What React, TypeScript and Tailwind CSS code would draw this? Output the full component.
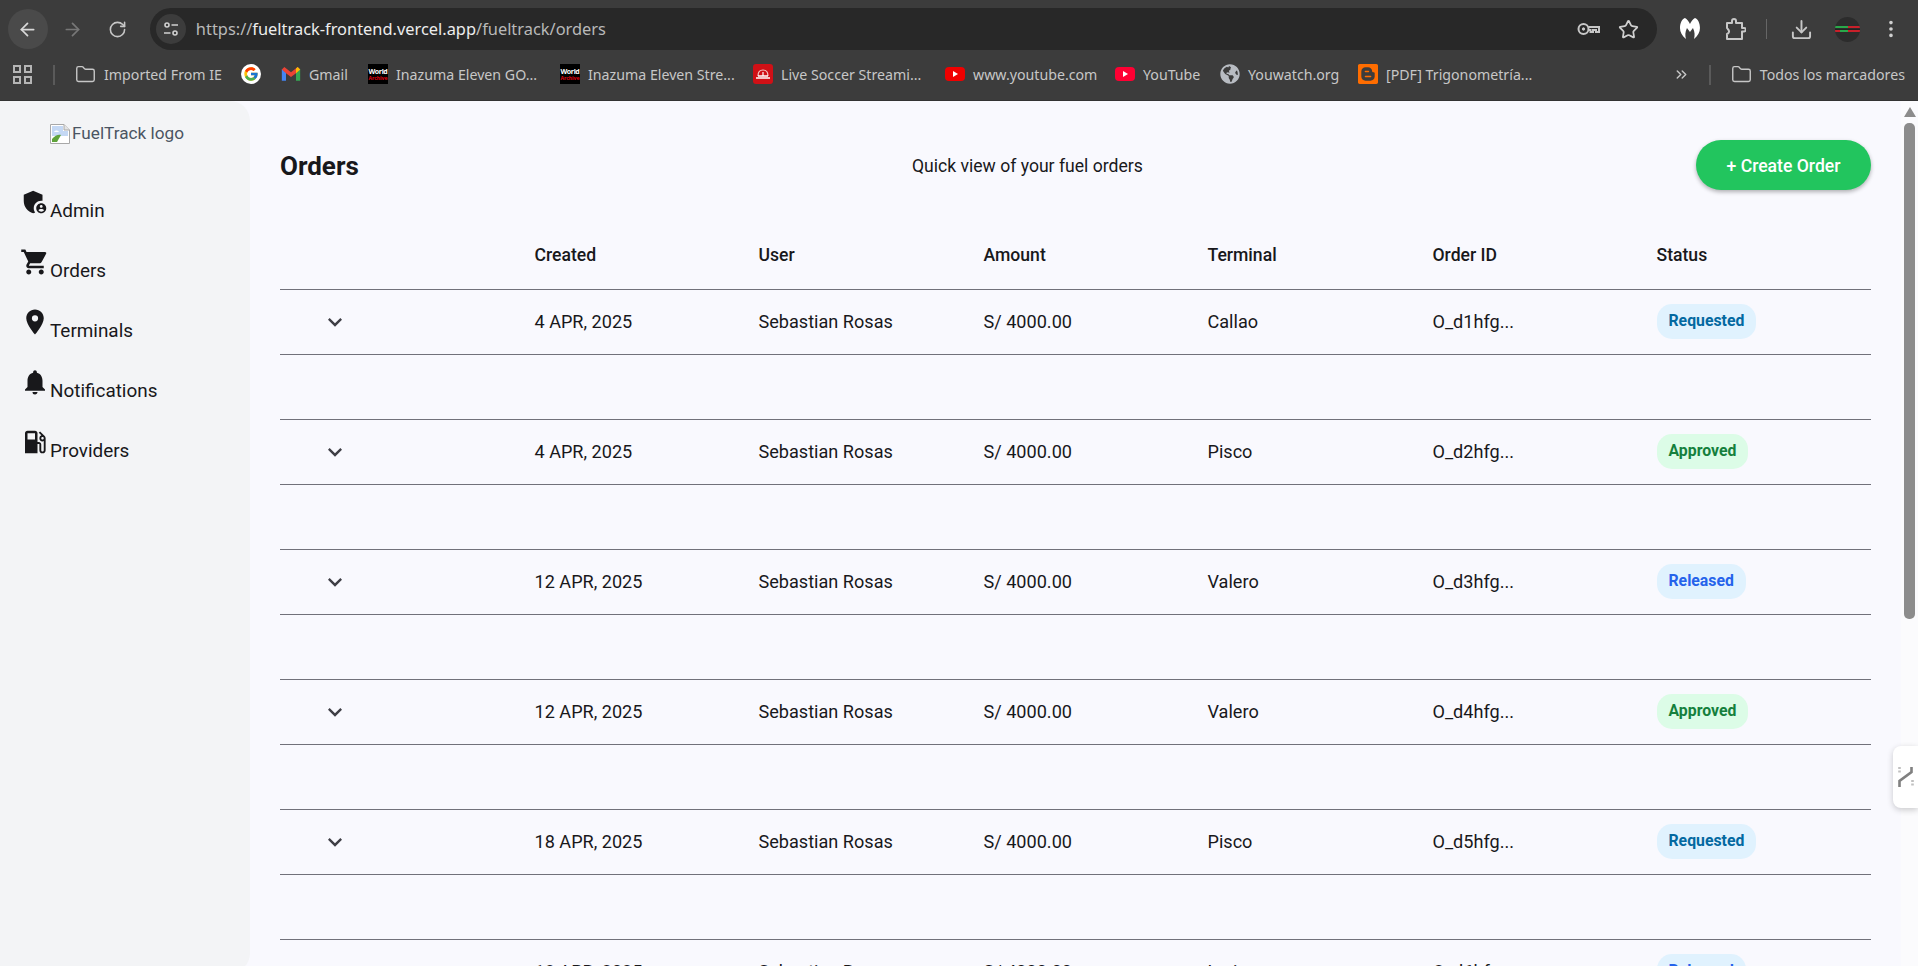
import { ArrowLeft, ArrowRight, RotateCw, Star, Download, EllipsisVertical, Folder, ChevronsRight } from 'lucide-react'
import { FcGoogle } from 'react-icons/fc'
import { SiBlogger } from 'react-icons/si'
import { FaGlobeAmericas } from 'react-icons/fa'
import { MdAdminPanelSettings, MdShoppingCart, MdLocationOn, MdNotifications, MdLocalGasStation, MdExpandMore } from 'react-icons/md'

function WorldIcon() {
  return (
    <span className="w-5 h-5 bg-black flex flex-col items-center justify-center shrink-0 leading-none font-bold overflow-hidden">
      <span className="text-[7px] text-white leading-[7px] tracking-tighter">World</span>
      <span className="text-[5px] text-red-600 leading-[6px]">Archive</span>
    </span>
  )
}

function GmailIcon() {
  return (
    <svg width="20" height="20" viewBox="0 0 24 24" className="shrink-0">
      <path d="M1 6v14h5V10z" fill="#4285f4" />
      <path d="M23 6v14h-5V10z" fill="#34a853" />
      <path d="M1 6.5 L4 3.5 L12 10 L20 3.5 L23 6.5 L18 11 L12 15.5 L6 11z" fill="#ea4335" />
      <path d="M18 5.5 20 3.5 23 6.5 18 11z" fill="#fbbc04" />
    </svg>
  )
}

function SoccerIcon() {
  return (
    <svg width="20" height="20" viewBox="0 0 20 20" className="shrink-0">
      <rect width="20" height="20" rx="3" fill="#d01016" />
      <path d="M5 12c0-4 2-6 5-6s5 2 5 6" fill="none" stroke="#f6c9c9" strokeWidth="1.2" />
      <path d="M3 14h14M5 12h10" stroke="#fff" strokeWidth="1.3" />
      <path d="M10 8v4" stroke="#fff" strokeWidth="1.2" />
    </svg>
  )
}

function YoutubeIcon({ color }: { color: string }) {
  return (
    <svg width="20" height="20" viewBox="0 0 20 20" className="shrink-0">
      <rect y="3" width="20" height="14" rx="4" fill={color} />
      <path d="M8 7l5 3-5 3z" fill="#fff" />
    </svg>
  )
}

function KeyIcon() {
  return (
    <svg width="23" height="14" viewBox="0 0 23 14" fill="none" stroke="#c7c7c7" strokeWidth="2" className="shrink-0">
      <circle cx="6.5" cy="7" r="5" />
      <circle cx="6.5" cy="7" r="1.2" fill="#c7c7c7" strokeWidth="1" />
      <path d="M11.5 5H22V10H19V8H16V10H13.5V8H11.5" />
    </svg>
  )
}

function PuzzleIcon() {
  return (
    <svg width="21" height="23" viewBox="0 0 21 23" fill="none" stroke="#c7c7c7" strokeWidth="2" strokeLinejoin="round" className="ml-[24px] shrink-0">
      <path d="M2 5H7V3a2 2 0 0 1 4 0V5H17V10H19a1.8 1.8 0 0 1 0 3.6H17V21H2V16a2.6 2.6 0 0 0 1-4.6 2.6 2.6 0 0 0-1-1.4z" />
    </svg>
  )
}

const folderIcon = <Folder size={21} strokeWidth={1.6} className="text-[#c7c7c7] shrink-0" />

const bookmarks = [
  { icon: folderIcon, label: 'Imported From IE', width: 'w-[117px]' },
  { icon: <span className="w-5 h-5 bg-white rounded-full flex items-center justify-center shrink-0"><FcGoogle size={16} /></span>, label: '', width: '' },
  { icon: <GmailIcon />, label: 'Gmail', width: 'w-[39px]' },
  { icon: <WorldIcon />, label: 'Inazuma Eleven GO...', width: 'w-[144px]' },
  { icon: <WorldIcon />, label: 'Inazuma Eleven Stre...', width: 'w-[145px]' },
  { icon: <SoccerIcon />, label: 'Live Soccer Streami...', width: 'w-[144px]' },
  { icon: <YoutubeIcon color="#f00000" />, label: 'www.youtube.com', width: 'w-[122px]' },
  { icon: <YoutubeIcon color="#ff0033" />, label: 'YouTube', width: 'w-[57px]' },
  { icon: <FaGlobeAmericas size={20} className="text-[#b8bcc2] shrink-0" />, label: 'Youwatch.org', width: 'w-[90px]' },
  { icon: <SiBlogger size={20} className="text-[#ff6d00] shrink-0" />, label: '[PDF] Trigonometría...', width: 'w-[144px]' },
]

function BrowserChrome() {
  return (
    <div className="bg-[#3c3c3c] shrink-0 font-['Noto_Sans',sans-serif] border-b border-[#333]">
      <div className="h-[58px] flex items-center pl-2 pr-[16px]">
        <div className="w-10 h-10 rounded-full bg-[#4a4a4a] flex items-center justify-center">
          <ArrowLeft size={21} strokeWidth={2} className="text-[#d8d8d8]" />
        </div>
        <ArrowRight size={21} strokeWidth={2} className="text-[#777777] ml-[14px]" />
        <RotateCw size={19} strokeWidth={2} className="text-[#c7c7c7] ml-[25px]" />
        <div className="ml-[23px] w-[1510px] h-[42px] rounded-full bg-[#282828] flex items-center pl-[6px] pr-[18px]">
          <div className="w-[30px] h-[30px] rounded-full bg-[#3c3c3c] flex items-center justify-center">
            <svg width="18" height="18" viewBox="0 0 18 18" fill="none" stroke="#d0d0d0" strokeWidth="1.6">
              <circle cx="5" cy="5" r="2" />
              <path d="M9.5 5H16M2 13h6.5" />
              <circle cx="13" cy="13" r="2" />
            </svg>
          </div>
          <div className="ml-[10px] text-[16.4px] text-[#b9b9b9] flex-1">
            https://<span className="text-[#ededed]">fueltrack-frontend.vercel.app</span>/fueltrack/orders
          </div>
          <KeyIcon />
          <Star size={21} strokeWidth={2} className="text-[#d0d0d0] ml-[18px]" />
        </div>
        <svg width="22" height="24" viewBox="0 0 22 24" className="ml-[22px]">
          <path d="M1 11C1 6 3 2 6 1c2 1 4 4 5 6 1-2 3-5 5-6 3 1 5 5 5 10 0 4-2 8-6 11 1-3 1-7-1-11l-3 4-3-4c-2 4-2 8-1 11-4-3-6-7-6-11z" fill="#fff" />
        </svg>
        <PuzzleIcon />
        <div className="w-px h-[20px] bg-[#666] ml-[20px]" />
        <Download size={23} strokeWidth={2} className="text-[#c7c7c7] ml-[23px]" />
        <div className="w-[25px] h-[25px] rounded-full bg-[#2c2c2c] ml-[22px] flex flex-col justify-center overflow-hidden">
          <div className="h-[2px] bg-[linear-gradient(90deg,#2aa84a_50%,#c8202a_50%)]" />
          <div className="h-px mt-px bg-[#222]" />
          <div className="h-[2px] bg-[linear-gradient(90deg,#c8202a_20%,#2aa84a_20%,#2aa84a_50%,#c8202a_50%)]" />
        </div>
        <EllipsisVertical size={22} strokeWidth={2} className="text-[#d0d0d0] ml-[20px]" />
      </div>
      <div className="h-[42px] flex items-start pl-[13px] pr-[13px] text-[14.2px] text-[#c7c7c7]">
        <div className="h-[33px] flex items-center w-full">
          <div className="grid grid-cols-2 gap-[3px] w-[19px] h-[19px]">
            <span className="border-2 border-[#b5b5b5]" />
            <span className="border-2 border-[#b5b5b5]" />
            <span className="border-2 border-[#b5b5b5]" />
            <span className="border-2 border-[#b5b5b5]" />
          </div>
          <div className="w-[2px] h-[20px] bg-[#5a5a5a] ml-[21px] mr-[20px]" />
          <div className="flex items-center gap-[20px]">
            {bookmarks.map((b, i) => (
              <div key={i} className="flex items-center gap-2">
                {b.icon}
                {b.label && <span className={`${b.width} whitespace-nowrap`}>{b.label}</span>}
              </div>
            ))}
          </div>
          <ChevronsRight size={17} strokeWidth={2} className="text-[#c7c7c7] ml-auto" />
          <div className="w-[2px] h-[20px] bg-[#5a5a5a] ml-[19px] mr-[20px]" />
          <div className="flex items-center gap-2">
            {folderIcon}
            <span className="whitespace-nowrap">Todos los marcadores</span>
          </div>
        </div>
      </div>
    </div>
  )
}

const navItems = [
  { icon: <MdAdminPanelSettings size={30} />, label: 'Admin' },
  { icon: <MdShoppingCart size={30} />, label: 'Orders' },
  { icon: <MdLocationOn size={30} />, label: 'Terminals' },
  { icon: <MdNotifications size={30} />, label: 'Notifications' },
  { icon: <MdLocalGasStation size={30} />, label: 'Providers' },
]

function Sidebar() {
  return (
    <aside className="w-[250px] h-[872px] shrink-0 bg-[#f3f4f6] rounded-r-[20px] pl-5 pt-[21px] text-[#18181b]">
      <div className="flex items-center pl-[30px] text-[17.2px] text-[#4b5563] h-6">
        <svg width="20" height="20" viewBox="0 0 20 20" className="shrink-0">
          <path d="M0.5 0.5H14L19.5 6V19.5H0.5z" fill="#fff" stroke="#a8a8a8" />
          <path d="M14 0.5V6H19.5" fill="#e4e4e4" stroke="#a8a8a8" />
          <path d="M2 2h11v5h5v5H2z" fill="#c4d8f4" />
          <path d="M2 18v-3c3-4 7-5 9-4l-4 7z" fill="#5fa33b" />
          <path d="M4 8c1-2 4-2 5 0z" fill="#fff" />
        </svg>
        <span className="ml-[2px]">FuelTrack logo</span>
      </div>
      <nav className="mt-[41px] flex flex-col">
        {navItems.map(item => (
          <div key={item.label} className="h-[60px] flex items-baseline text-[18.9px]">
            {item.icon}
            <span>{item.label}</span>
          </div>
        ))}
      </nav>
    </aside>
  )
}

type Order = { created: string; terminal: string; id: string; status: 'Requested' | 'Approved' | 'Released' }

const orders: Order[] = [
  { created: '4 APR, 2025', terminal: 'Callao', id: 'O_d1hfg...', status: 'Requested' },
  { created: '4 APR, 2025', terminal: 'Pisco', id: 'O_d2hfg...', status: 'Approved' },
  { created: '12 APR, 2025', terminal: 'Valero', id: 'O_d3hfg...', status: 'Released' },
  { created: '12 APR, 2025', terminal: 'Valero', id: 'O_d4hfg...', status: 'Approved' },
  { created: '18 APR, 2025', terminal: 'Pisco', id: 'O_d5hfg...', status: 'Requested' },
  { created: '18 APR, 2025', terminal: 'Lurin', id: 'O_d6hfg...', status: 'Released' },
]

const statusStyles = {
  Requested: 'bg-[#e0f2fe] text-[#0369a1]',
  Approved: 'bg-[#dcfce7] text-[#15803d]',
  Released: 'bg-[#e0f2fe] text-[#2563eb]',
}

const gridCols = 'grid grid-cols-[254.5px_224px_225px_224px_225px_224px_1fr] items-center'

function OrdersTable() {
  return (
    <div className="mt-[32px]">
      <div className={`${gridCols} h-[68px] pb-px border-b border-[#71717a] font-medium`}>
        <div />
        <div>Created</div>
        <div>User</div>
        <div>Amount</div>
        <div>Terminal</div>
        <div>Order ID</div>
        <div>Status</div>
      </div>
      {orders.map(order => (
        <div key={order.id}>
          <div className={`${gridCols} h-[65px] border-b border-[#71717a] text-[18.1px]`}>
            <div className="pl-[41px] text-[#3f3f46]"><MdExpandMore size={28} /></div>
            <div>{order.created}</div>
            <div>Sebastian Rosas</div>
            <div>S/ 4000.00</div>
            <div>{order.terminal}</div>
            <div>{order.id}</div>
            <div>
              <span className={`inline-flex items-center h-[35px] -translate-y-px px-3 rounded-[15px] text-[15.8px] font-bold ${statusStyles[order.status]}`}>
                {order.status}
              </span>
            </div>
          </div>
          <div className="h-[65px] border-b border-[#71717a]" />
        </div>
      ))}
    </div>
  )
}

export default function App() {
  return (
    <div className="h-[966px] overflow-hidden flex flex-col relative font-['Roboto',sans-serif] bg-[#f9f9fe]">
      <BrowserChrome />
      <div className="flex flex-1 min-h-0 overflow-hidden">
        <Sidebar />
        <main className="flex-1 min-w-0 pl-[30px] pr-[30px] pt-[39px] text-[17.6px] text-[#18181b]">
          <div className="flex items-center justify-between h-[50px]">
            <h1 className="text-[26px] font-bold pt-[2px]">Orders</h1>
            <p className="pt-[2px]">Quick view of your fuel orders</p>
            <button className="h-[50px] w-[175px] pt-[2px] rounded-full bg-[#22c55e] text-white font-medium shadow-[0_2px_4px_rgba(0,0,0,0.3)]">+ Create Order</button>
          </div>
          <OrdersTable />
        </main>
        <div className="w-[17px] shrink-0 bg-[#fbfbfd] flex flex-col items-center pt-[6px]">
          <div className="w-0 h-0 border-x-[6px] border-x-transparent border-b-[10px] border-b-[#8c8c8c]" />
          <div className="w-[11px] h-[496px] mt-[6px] rounded-t-[5px] rounded-b-[5px] bg-[#8c8c8c]" />
        </div>
      </div>
      <div className="absolute right-0 top-[746px] w-[25px] h-[62px] rounded-l-lg bg-white shadow-[0_2px_6px_rgba(0,0,0,0.2)] flex items-center pl-[5px]">
        <svg width="16" height="22" viewBox="0 0 16 22" fill="none" strokeWidth="2.6">
          <path d="M1.5 21v-6l12-9V1" stroke="#808080" />
          <path d="M1.5 1v7M14.5 14v7" stroke="#c0c0c0" strokeDasharray="2 1.5" />
        </svg>
      </div>
    </div>
  )
}
